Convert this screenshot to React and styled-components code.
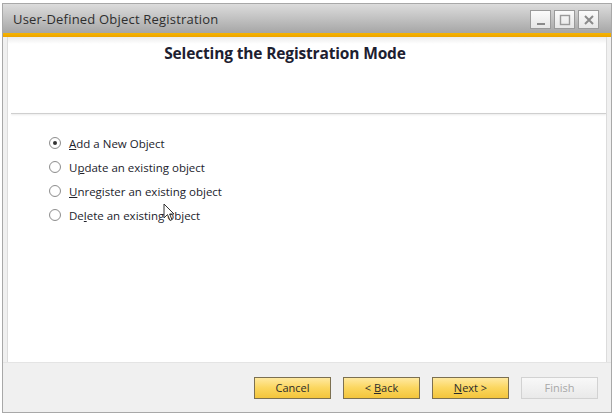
import React, { useState } from 'react';
import styled, { createGlobalStyle } from 'styled-components';

// Wizard dialog: gray title bar with orange accent, a heading strip,
// radio options for the registration mode and a footer with the nav buttons.

const GlobalStyle = createGlobalStyle`
    body {
        margin: 0;
        background: #ffffff;
        font-family: "Open Sans", "DejaVu Sans", sans-serif;
    }
`

const Window = styled.div`
    position: relative;
    box-sizing: border-box;
    width: 610px;
    height: 410px;
    margin: 3px 0 0 2px;
    border: 1px solid #a8a8a8;
    background: #f0f0f0;
    display: flex;
    flex-direction: column;
`

const TitleBar = styled.div`
    height: 29px;
    display: flex;
    align-items: center;
    justify-content: space-between;
    padding: 0 12px 0 10px;
    background: linear-gradient(to bottom, #dcdcdc 0%, #c4c4c4 45%, #a6a6a6 100%);
`

const Title = styled.div`
    font-size: 13px;
    color: #2e2e2e;
    letter-spacing: 0.2px;
`

const Controls = styled.div`
    display: flex;
    gap: 3px;
    margin-top: 2px;
`

const ControlButton = styled.div`
    width: 21px;
    height: 19px;
    box-sizing: border-box;
    border: 1px solid #9a9a9a;
    background: linear-gradient(to bottom, #fbfbfb, #e6e6e6);
    display: flex;
    align-items: center;
    justify-content: center;
`

const Accent = styled.div`
    height: 4px;
    background: linear-gradient(to bottom, #f6b400, #eda400);
`

const Body = styled.div`
    flex: 1;
    margin: 0 4px;
    background: #ffffff;
    border-left: 1px solid #dcdcdc;
    border-right: 1px solid #dcdcdc;
    display: flex;
    flex-direction: column;
    position: relative;
`

const Header = styled.div`
    height: 76px;
    background: linear-gradient(to bottom, #ececec 0px, #ffffff 7px);
    display: flex;
    justify-content: center;
    padding: 5px 44px 0 0;
    box-sizing: border-box;
`

const Heading = styled.div`
    font-size: 15.5px;
    font-weight: 700;
    color: #1d2030;
    letter-spacing: -0.15px;
`

const Separator = styled.div`
    height: 1px;
    margin-left: 3px;
    background: #cfcfcf;
    box-shadow: 0 1px 2px rgba(0, 0, 0, 0.12);
`

const Options = styled.div`
    display: flex;
    flex-direction: column;
    padding: 17px 0 0 41px;
`

const Option = styled.label`
    display: flex;
    align-items: center;
    height: 24px;
    font-size: 11.5px;
    color: #22232c;
    cursor: default;
`

const Radio = styled.span`
    width: 12px;
    height: 12px;
    box-sizing: border-box;
    border-radius: 50%;
    border: 1px solid #8e8e8e;
    background: radial-gradient(circle, #ffffff 55%, #ececec 100%);
    display: flex;
    align-items: center;
    justify-content: center;
    margin-right: 8px;

    &::after {
        content: "";
        width: 4px;
        height: 4px;
        border-radius: 50%;
        background: ${props => props.checked ? "#333" : "transparent"};
    }
`

const Key = styled.span`
    text-decoration: underline;
`

const Footer = styled.div`
    height: 50px;
    display: flex;
    align-items: center;
    justify-content: flex-end;
    gap: 12px;
    padding: 0 13px 0 0;
    box-sizing: border-box;
    border-top: 1px solid #e4e4e4;
`

const Button = styled.div`
    width: 77px;
    height: 22px;
    box-sizing: border-box;
    display: flex;
    align-items: center;
    justify-content: center;
    font-size: 11px;
    color: ${props => props.disabled ? "#a8a8a8" : "#2b2b2b"};
    border: 1px solid ${props => props.disabled ? "#d2d2d2" : "#7c7051"};
    background: ${props => props.disabled
        ? "linear-gradient(to bottom, #f8f8f8, #e9e9e9)"
        : "linear-gradient(to bottom, #ffe9a0 0%, #fbd65e 50%, #f3c53c 100%)"};
`

const Cursor = styled.svg`
    position: absolute;
    left: 155px;
    top: 166px;
`

const options = [
    { pre: "", key: "A", post: "dd a New Object" },
    { pre: "U", key: "p", post: "date an existing object" },
    { pre: "", key: "U", post: "nregister an existing object" },
    { pre: "De", key: "l", post: "ete an existing object" },
]

const App = () => {
    const [mode, setMode] = useState(0);

    return (
        <>
        <GlobalStyle />
        <Window>
            <TitleBar>
                <Title>User-Defined Object Registration</Title>
                <Controls>
                    <ControlButton>
                        <svg width="12" height="12" viewBox="0 0 12 12">
                            <rect x="2" y="9" width="8" height="2" fill="#8a8a8a" />
                        </svg>
                    </ControlButton>
                    <ControlButton>
                        <svg width="12" height="12" viewBox="0 0 12 12">
                            <rect x="1.5" y="1.5" width="9" height="9" fill="none" stroke="#9a9a9a" strokeWidth="1.4" />
                        </svg>
                    </ControlButton>
                    <ControlButton>
                        <svg width="12" height="12" viewBox="0 0 12 12">
                            <path d="M2 2 L10 10 M10 2 L2 10" stroke="#8a8a8a" strokeWidth="2" />
                        </svg>
                    </ControlButton>
                </Controls>
            </TitleBar>
            <Accent />

            <Body>
                <Header>
                    <Heading>Selecting the Registration Mode</Heading>
                </Header>
                <Separator />
                <Options>
                    {options.map((o, i) => (
                        <Option key={i} onClick={() => setMode(i)}>
                            <Radio checked={mode === i} />
                            <span>{o.pre}<Key>{o.key}</Key>{o.post}</span>
                        </Option>
                    ))}
                </Options>
                <Cursor width="12" height="19" viewBox="0 0 12 19">
                    <path d="M1 1 L1 15 L4.5 11.5 L7 17.5 L9 16.6 L6.6 11 L11 11 Z" fill="#ffffff" stroke="#333" strokeWidth="1" />
                </Cursor>
            </Body>

            <Footer>
                <Button><span>Cancel</span></Button>
                <Button><span>&lt; <Key>B</Key>ack</span></Button>
                <Button><span><Key>N</Key>ext &gt;</span></Button>
                <Button disabled><span>Finish</span></Button>
            </Footer>
        </Window>
        </>
    )
}

export default App;
